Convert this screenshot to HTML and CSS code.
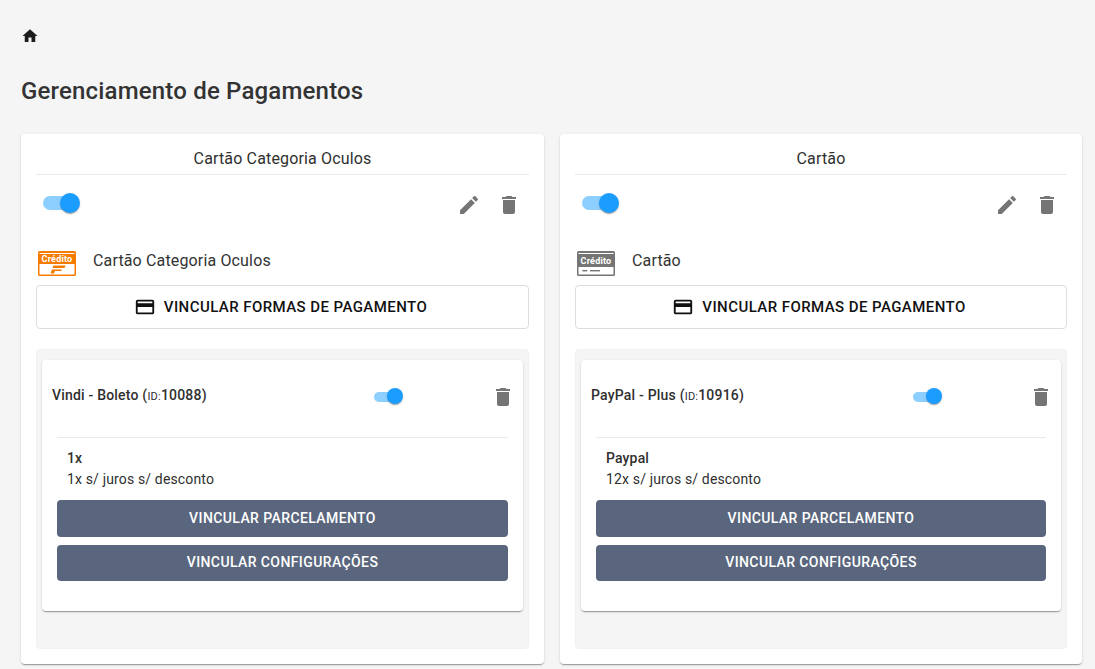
FILE: index.html
```html
<!DOCTYPE html>
<html lang="pt-BR">
<head>
<meta charset="utf-8">
<title>Gerenciamento de Pagamentos</title>
<link rel="stylesheet" href="styles.css">
</head>
<body>
<svg class="defs" width="0" height="0" aria-hidden="true">
  <symbol id="i-home" viewBox="0 0 24 24"><path d="M10 20v-6h4v6h5v-8h3L12 3 2 12h3v8z"/></symbol>
  <symbol id="i-edit" viewBox="0 0 24 24"><path d="M3 17.25V21h3.75L17.81 9.94l-3.75-3.75L3 17.25zM20.71 7.04c.39-.39.39-1.02 0-1.41l-2.34-2.34c-.39-.39-1.02-.39-1.41 0l-1.83 1.83 3.75 3.75 1.83-1.83z"/></symbol>
  <symbol id="i-del" viewBox="0 0 24 24"><path d="M6 19c0 1.1.9 2 2 2h8c1.1 0 2-.9 2-2V7H6v12zM19 4h-3.5l-1-1h-5l-1 1H5v2h14V4z"/></symbol>
  <symbol id="i-card" viewBox="0 0 24 24"><path d="M20 4H4c-1.11 0-1.99.89-1.99 2L2 18c0 1.11.89 2 2 2h16c1.11 0 2-.89 2-2V6c0-1.11-.89-2-2-2zm0 14H4v-6h16v6zm0-10H4V6h16v2z"/></symbol>
</svg>
<main class="page">
  <nav class="crumbs"><svg class="home"><use href="#i-home"/></svg></nav>
  <h1 class="heading">Gerenciamento de Pagamentos</h1>
  <div class="grid">

    <section class="card">
      <h2 class="card-title">Cartão Categoria Oculos</h2>
      <div class="controls">
        <span class="switch"><span class="track"></span><span class="thumb"></span></span>
        <div class="actions">
          <span class="icon-btn"><svg class="icon"><use href="#i-edit"/></svg></span>
          <span class="icon-btn"><svg class="icon"><use href="#i-del"/></svg></span>
        </div>
      </div>
      <div class="method">
        <svg class="badge badge-orange" viewBox="0 0 38 25">
          <rect x="0" y="0" width="38" height="25" rx="1.5" class="badge-fill"/>
          <rect x="1.5" y="2" width="35" height="1" class="badge-paper"/>
          <rect x="1.5" y="13" width="35" height="10.5" class="badge-paper"/>
          <text x="19" y="11.2" class="badge-text">Crédito</text>
          <path d="M15.5 14.5H27.5L26.5 17H14.5zM14 18.5H24L23.3 20H17L16 22.5H12.5z" class="badge-mark"/>
        </svg>
        <span class="method-name">Cartão Categoria Oculos</span>
      </div>
      <button class="outline-btn"><svg class="btn-icon"><use href="#i-card"/></svg>Vincular formas de pagamento</button>
      <div class="panel">
        <article class="item">
          <div class="item-head">
            <div class="item-title">Vindi - Boleto <span class="paren">(<small>ID:</small>10088)</span></div>
            <span class="switch switch-sm"><span class="track"></span><span class="thumb"></span></span>
            <svg class="icon"><use href="#i-del"/></svg>
          </div>
          <div class="item-body">
            <strong>1x</strong>
            <span>1x s/ juros s/ desconto</span>
          </div>
          <button class="solid-btn">Vincular parcelamento</button>
          <button class="solid-btn">Vincular configurações</button>
        </article>
      </div>
    </section>

    <section class="card">
      <h2 class="card-title">Cartão</h2>
      <div class="controls">
        <span class="switch"><span class="track"></span><span class="thumb"></span></span>
        <div class="actions">
          <span class="icon-btn"><svg class="icon"><use href="#i-edit"/></svg></span>
          <span class="icon-btn"><svg class="icon"><use href="#i-del"/></svg></span>
        </div>
      </div>
      <div class="method">
        <svg class="badge badge-gray" viewBox="0 0 38 25">
          <rect x="0" y="0" width="38" height="25" rx="1.5" class="badge-fill"/>
          <rect x="1.5" y="2" width="35" height="1" class="badge-paper"/>
          <rect x="1.5" y="16" width="35" height="7.5" class="badge-paper"/>
          <text x="19" y="13" class="badge-text">Crédito</text>
          <rect x="5.3" y="19" width="5" height="1.4" class="badge-fill"/>
          <rect x="13" y="19" width="10" height="1.4" class="badge-fill"/>
        </svg>
        <span class="method-name">Cartão</span>
      </div>
      <button class="outline-btn"><svg class="btn-icon"><use href="#i-card"/></svg>Vincular formas de pagamento</button>
      <div class="panel">
        <article class="item">
          <div class="item-head">
            <div class="item-title">PayPal - Plus <span class="paren">(<small>ID:</small>10916)</span></div>
            <span class="switch switch-sm"><span class="track"></span><span class="thumb"></span></span>
            <svg class="icon"><use href="#i-del"/></svg>
          </div>
          <div class="item-body">
            <strong>Paypal</strong>
            <span>12x s/ juros s/ desconto</span>
          </div>
          <button class="solid-btn">Vincular parcelamento</button>
          <button class="solid-btn">Vincular configurações</button>
        </article>
      </div>
    </section>

  </div>
</main>
</body>
</html>
```

FILE: styles.css
```css
* { box-sizing: border-box; }
html, body { margin: 0; height: 669px; overflow: hidden; }
body {
  background: #f5f5f5;
  color: #2f2f2f;
  font-family: Roboto, "Liberation Sans", sans-serif;
  font-size: 14px;
}
.defs { position: absolute; }
.page { padding: 27px 13px 0 21px; }
.crumbs { height: 18px; }
.home { display: block; width: 18px; height: 18px; fill: #1c1c1c; }
.heading {
  margin: 27px 0 0;
  height: 62px;
  font-size: 24px;
  line-height: 38px;
  font-weight: 500;
  letter-spacing: .18px;
  color: #333;
}
.grid { display: grid; grid-template-columns: 523px 522px; gap: 16px; }
.card {
  background: #fff;
  border-radius: 4px;
  padding: 8px 15px 15px;
  box-shadow: 0 2px 1px -1px rgba(0,0,0,.2), 0 1px 1px 0 rgba(0,0,0,.14), 0 1px 3px 0 rgba(0,0,0,.12);
}
.card-title {
  margin: 0;
  height: 33px;
  padding-top: 1px;
  line-height: 32px;
  text-align: center;
  font-size: 16px;
  font-weight: 400;
  letter-spacing: .15px;
  border-bottom: 1px solid #eaeaea;
}
.controls { display: flex; justify-content: space-between; align-items: center; margin-top: 10px; height: 40px; }
.actions { display: flex; }
.icon-btn { display: flex; align-items: center; justify-content: center; width: 40px; height: 40px; }
.icon { display: block; width: 24px; height: 24px; fill: #757575; }
.switch { position: relative; display: block; width: 37px; height: 20px; margin: -4px 0 0 7px; }
.track { position: absolute; left: 0; top: 3px; width: 34px; height: 14px; border-radius: 7px; background: #8dcfff; }
.thumb {
  position: absolute; right: 0; top: 0; width: 20px; height: 20px; border-radius: 50%;
  background: #1b9dff;
  box-shadow: 0 2px 1px -1px rgba(0,0,0,.2), 0 1px 1px 0 rgba(0,0,0,.14), 0 1px 3px 0 rgba(0,0,0,.12);
}
.switch-sm { width: 29px; height: 16px; margin: -2px 0 0; }
.switch-sm .track { top: 4px; width: 26px; height: 10px; border-radius: 5px; }
.switch-sm .thumb { width: 16px; height: 16px; }
.method { display: flex; align-items: flex-start; height: 27px; margin-top: 25px; padding-left: 2px; }
.badge { flex: none; display: block; width: 38px; height: 25px; margin-top: 1px; }
.badge-orange .badge-fill, .badge-orange .badge-mark { fill: #f57c00; }
.badge-gray .badge-fill { fill: #757575; }
.badge-paper { fill: #fff; }
.badge-text { fill: #fff; font-family: Roboto, sans-serif; font-size: 9px; font-weight: 700; text-anchor: middle; letter-spacing: .2px; }
.method-name { margin-left: 17px; padding-top: 1px; font-size: 16px; line-height: 20px; letter-spacing: .15px; color: #333; }
.outline-btn {
  display: flex; align-items: center; justify-content: center; gap: 8px;
  width: 100%; height: 44px; margin-top: 8px; padding: 0 4px 0 0;
  background: #fff; border: 1px solid #ddd; border-radius: 4px;
  font: 500 15px/1 Roboto, sans-serif; letter-spacing: .43px; text-transform: uppercase; color: #111;
}
.btn-icon { width: 22px; height: 22px; fill: #111; }
.panel { height: 300px; margin-top: 20px; padding: 10px 5px 0; background: #f5f5f5; border: 1px solid #f1f1f1; border-radius: 4px; }
.item {
  background: #fff; border-radius: 4px; padding: 0 15px 30px; height: 251px;
  box-shadow: 0 2px 1px -1px rgba(0,0,0,.2), 0 1px 1px 0 rgba(0,0,0,.14), 0 1px 3px 0 rgba(0,0,0,.12);
}
.item-head {
  display: grid; grid-template-columns: 322px 1fr 24px; align-items: center;
  height: 77px; margin: 0 -7px 0 -5px; padding-bottom: 3px;
}
.item-title { font-size: 14px; font-weight: 500; letter-spacing: .2px; margin-top: -4px; }
.item-title small { font-size: 11px; font-weight: 400; }
.item-body {
  display: flex; flex-direction: column;
  border-top: 1px solid #eaeaea; padding: 10px;
  height: 63px; line-height: 21px; letter-spacing: .15px;
}
.item-body strong { font-weight: 500; }
.solid-btn {
  display: block; width: 100%; height: 36.5px; margin-bottom: 8px; padding: 0 0 1px;
  background: #5a667d; color: #fff; border: 0; border-radius: 4px;
  font: 500 14px/1 Roboto, sans-serif; letter-spacing: .4px; text-transform: uppercase;
}
```
